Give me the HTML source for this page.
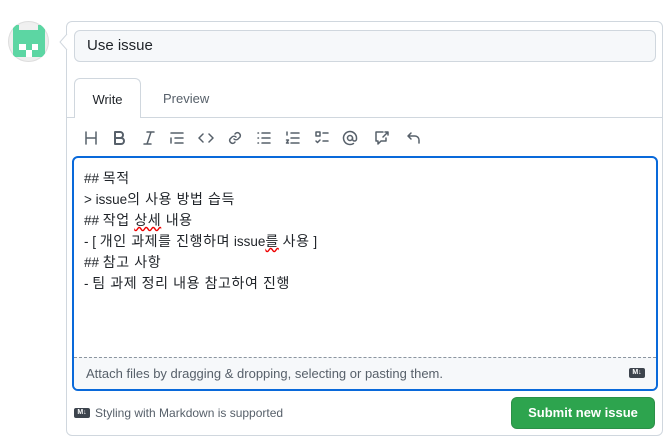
<!DOCTYPE html>
<html><head><meta charset="utf-8"><style>
body{margin:0;width:667px;height:441px;background:#fff;font-family:"Liberation Sans","Noto Sans CJK KR",sans-serif;position:relative;overflow:hidden;color:#1f2328}
.abs{position:absolute}
.box{left:66px;top:21px;width:597px;height:415px;border:1px solid #d0d7de;border-radius:6px;box-sizing:border-box}
.title{left:74px;top:30px;width:582px;height:32px;border:1px solid #d0d7de;border-radius:6px;background:#f6f8fa;box-sizing:border-box;font-size:15px;padding:6px 12px;color:#1f2328}
.tabline{left:66px;top:117px;width:597px;border-top:1px solid #d0d7de}
.tab{left:74px;top:78px;width:67px;height:40px;border:1px solid #d0d7de;border-bottom:none;border-radius:6px 6px 0 0;background:#fff;box-sizing:border-box;font-size:13px;text-align:center;line-height:42px}
.prev{left:163px;top:78px;font-size:13px;line-height:42px;color:#57606a}
.ta{left:72px;top:156px;width:586px;height:235px;border:2px solid #0969da;border-radius:6px;box-sizing:border-box;overflow:hidden}
.txt{left:10px;top:10px;font-size:13.5px;white-space:pre}
.txt div{height:21px;line-height:21px;overflow:visible}
.k{font-size:14px;letter-spacing:0.6px;line-height:1}
.foot{left:0;top:199px;width:100%;height:34px;background:#f6f8fa;border-top:1px dashed #8c959f;font-size:13px;color:#57606a}
.md{display:inline-block;width:16px;height:10px;background:#3d444d;border-radius:2px;color:#fff;font-size:7px;line-height:10px;text-align:center;font-weight:bold}
.btn{left:511px;top:397px;width:144px;height:32px;background:#2da44e;border:1px solid rgba(31,35,40,.15);border-radius:6px;box-sizing:border-box;color:#fff;font-weight:bold;font-size:13px;text-align:center;line-height:30px}
svg.i{position:absolute;top:130px;width:16px;height:16px;fill:none;stroke:#57606a;stroke-width:1.5;stroke-linecap:round;stroke-linejoin:round}
</style></head><body>
<div class="abs" style="left:8px;top:21px;width:41px;height:41px;border-radius:50%;background:#efefef;overflow:hidden;box-shadow:inset 0 0 0 1px #dedede">
<svg width="41" height="41"><rect x="5" y="4" width="32" height="32" fill="#5cd6a3"/><g fill="#f0f0f0"><rect x="11" y="4" width="19" height="5"/></g><g fill="#fff"><rect x="11" y="23" width="7" height="6"/><rect x="24" y="23" width="6" height="6"/><rect x="18" y="29" width="6" height="7"/></g></svg></div>
<div class="abs box"></div>
<svg class="abs" style="left:59px;top:34px" width="9" height="16"><path d="M8 0 L1 8 L8 16" fill="#fff" stroke="#d0d7de"/></svg>
<div class="abs title">Use issue</div>
<div class="abs tabline"></div>
<div class="abs tab">Write</div>
<div class="abs prev">Preview</div>
<svg class="i" style="left:83px"><path d="M3 2v12M13 2v12M3 8h10"/></svg>
<svg class="i" style="left:111px"><path d="M4 2h5a3 3 0 010 6H4zM4 8h6a3 3 0 010 6H4z" stroke-width="2"/></svg>
<svg class="i" style="left:141px"><path d="M6 2h7M3 14h7M10 2L6 14"/></svg>
<svg class="i" style="left:169px"><path d="M2 3h12M6 8h8M6 13h8M2 8v5"/></svg>
<svg class="i" style="left:198px"><path d="M5 4L1 8l4 4M11 4l4 4-4 4"/></svg>
<svg class="i" style="left:227px"><path d="M7 9a3 3 0 004 0l2-2a3 3 0 00-4-4l-1 1M9 7a3 3 0 00-4 0l-2 2a3 3 0 004 4l1-1"/></svg>
<svg class="i" style="left:256px"><path d="M6 3h8M6 8h8M6 13h8M2 3h.5M2 8h.5M2 13h.5"/></svg>
<svg class="i" style="left:285px"><path d="M6 3h8M6 8h8M6 13h8M2 2v3M1.5 10h2l-2 3h2"/></svg>
<svg class="i" style="left:314px"><path d="M2 2h4v4H2zM9 3h5M9 11h5M2 11l1.5 1.5L6 10"/></svg>
<svg class="i" style="left:342px"><circle cx="8" cy="8" r="2.5"/><path d="M10.5 8v1a2 2 0 004 0V8a6.5 6.5 0 10-3 5.5"/></svg>
<svg class="i" style="left:374px"><path d="M9 2H2v9h2v3l3-3h5V8M11 2h3v3M14 2l-5 5"/></svg>
<svg class="i" style="left:406px"><path d="M5 3L2 6l3 3M2 6h7a4 4 0 014 4v3"/></svg>
<div class="abs ta">
<div class="abs txt"><div>## <span class="k">목적</span></div><div>&gt; issue<span class="k">의 사용 방법 습득</span></div><div>## <span class="k">작업 <span style="text-decoration:underline wavy #e00">상세</span> 내용</span></div><div>- [ <span class="k">개인 과제를 진행하며</span> issue<span class="k" style="text-decoration:underline wavy #e00">를</span> <span class="k">사용</span> ]</div><div>## <span class="k">참고 사항</span></div><div>- <span class="k">팀 과제 정리 내용 참고하여 진행</span></div></div>
<div class="abs foot"><span class="abs" style="left:12px;top:8px">Attach files by dragging &amp; dropping, selecting or pasting them.</span><span class="abs md" style="left:555px;top:10px">M↓</span></div>
</div>
<span class="abs md" style="left:74px;top:408px">M↓</span>
<div class="abs" style="left:95px;top:406px;font-size:12px;color:#57606a">Styling with Markdown is supported</div>
<div class="abs btn">Submit new issue</div>
</body></html>
